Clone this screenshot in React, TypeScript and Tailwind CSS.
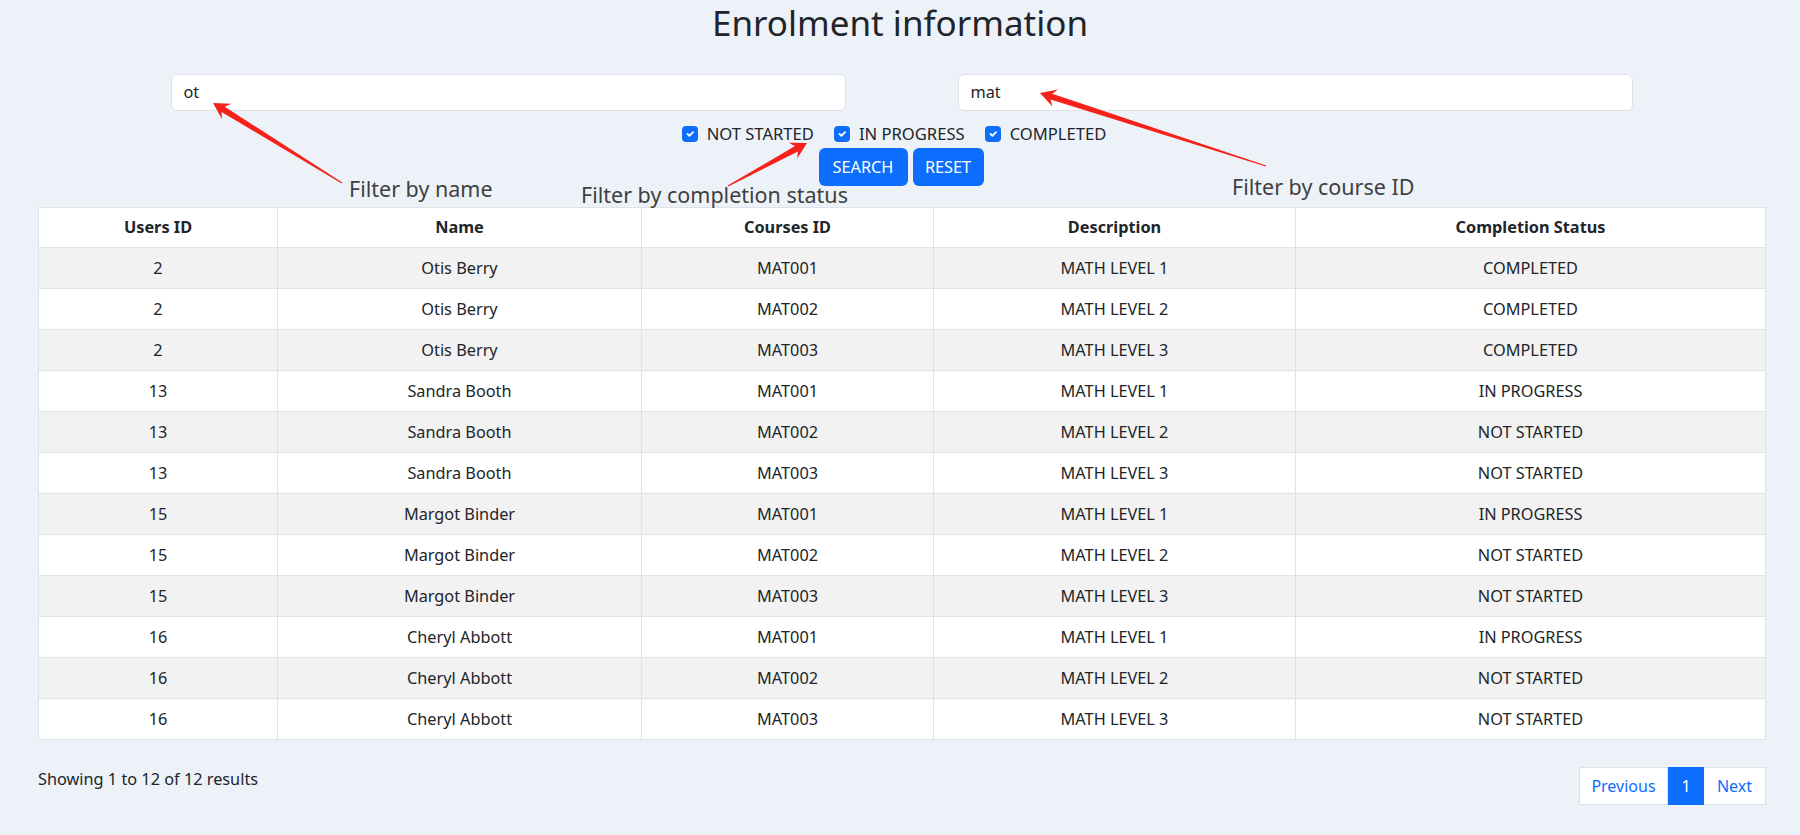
import React from "react";

const rows: [string, string, string, string, string][] = [
  ["2", "Otis Berry", "MAT001", "MATH LEVEL 1", "COMPLETED"],
  ["2", "Otis Berry", "MAT002", "MATH LEVEL 2", "COMPLETED"],
  ["2", "Otis Berry", "MAT003", "MATH LEVEL 3", "COMPLETED"],
  ["13", "Sandra Booth", "MAT001", "MATH LEVEL 1", "IN PROGRESS"],
  ["13", "Sandra Booth", "MAT002", "MATH LEVEL 2", "NOT STARTED"],
  ["13", "Sandra Booth", "MAT003", "MATH LEVEL 3", "NOT STARTED"],
  ["15", "Margot Binder", "MAT001", "MATH LEVEL 1", "IN PROGRESS"],
  ["15", "Margot Binder", "MAT002", "MATH LEVEL 2", "NOT STARTED"],
  ["15", "Margot Binder", "MAT003", "MATH LEVEL 3", "NOT STARTED"],
  ["16", "Cheryl Abbott", "MAT001", "MATH LEVEL 1", "IN PROGRESS"],
  ["16", "Cheryl Abbott", "MAT002", "MATH LEVEL 2", "NOT STARTED"],
  ["16", "Cheryl Abbott", "MAT003", "MATH LEVEL 3", "NOT STARTED"],
];

function arrowPoints(tx: number, ty: number, hx: number, hy: number) {
  const dx = hx - tx;
  const dy = hy - ty;
  const len = Math.hypot(dx, dy);
  const ux = dx / len;
  const uy = dy / len;
  const nx = -uy;
  const ny = ux;
  const p = (along: number, side: number) =>
    `${(hx - ux * along + nx * side).toFixed(1)},${(hy - uy * along + ny * side).toFixed(1)}`;
  const tail = len;
  return [
    p(tail, 0.6),
    p(12, 3),
    p(16, 9),
    p(0, 0),
    p(16, -9),
    p(12, -3),
    p(tail, -0.6),
  ].join(" ");
}

function Check({ label }: { label: string }) {
  return (
    <label className="flex items-center gap-[9px]">
      <span className="w-4 h-4 rounded-[4px] bg-[#0d6efd] flex items-center justify-center">
        <svg width="12" height="12" viewBox="0 0 20 20">
          <path d="M6 10l3 3l6-6" fill="none" stroke="#fff" strokeWidth="3" strokeLinecap="round" strokeLinejoin="round" />
        </svg>
      </span>
      <span className="text-[16.6px]">{label}</span>
    </label>
  );
}

export default function App() {
  return (
    <div
      className="relative min-h-screen bg-[#edf2f9] text-[#212529] text-[16.3px]"
      style={{ fontFamily: '"Noto Sans", "Open Sans", sans-serif' }}
    >
      <h2 className="text-center text-[35px] leading-[43px] pt-[1px] font-normal">Enrolment information</h2>

      <div className="mt-[30px] flex justify-center gap-[112px] pl-[3px]">
        <div className="w-[675px] h-[37px] bg-white border border-[#dee2e6] rounded-[6px] pl-3 flex items-center">ot</div>
        <div className="w-[675px] h-[37px] bg-white border border-[#dee2e6] rounded-[6px] pl-3 flex items-center">mat</div>
      </div>

      <div className="mt-[11px] h-[24px] flex justify-center items-center gap-5 pr-[12px]">
        <Check label="NOT STARTED" />
        <Check label="IN PROGRESS" />
        <Check label="COMPLETED" />
      </div>

      <div className="mt-[2px] flex justify-center gap-[5px] pl-[2px]">
        <button className="w-[89px] h-[38px] rounded-[6px] bg-[#0d6efd] text-white">SEARCH</button>
        <button className="w-[71px] h-[38px] rounded-[6px] bg-[#0d6efd] text-white">RESET</button>
      </div>

      <div className="mt-[21px] ml-[38px] w-[1728px] border border-[#dee2e6] bg-white">
        <div className="grid grid-cols-[238px_364px_292px_362px_1fr] h-[39px] font-bold">
          {["Users ID", "Name", "Courses ID", "Description", "Completion Status"].map((h, i) => (
            <div key={h} className={`flex items-center justify-center ${i > 0 ? "border-l border-[#dee2e6]" : ""}`}>
              {h}
            </div>
          ))}
        </div>
        {rows.map((r, ri) => (
          <div
            key={ri}
            className={`grid grid-cols-[238px_364px_292px_362px_1fr] h-[41px] border-t border-[#dee2e6] ${
              ri % 2 === 0 ? "bg-[#f2f2f2]" : "bg-white"
            }`}
          >
            {r.map((c, i) => (
              <div key={i} className={`flex items-center justify-center ${i > 0 ? "border-l border-[#dee2e6]" : ""}`}>
                {c}
              </div>
            ))}
          </div>
        ))}
      </div>

      <div className="mt-[27px] ml-[38px] w-[1728px] flex justify-between items-start">
        <div className="leading-[24px]">Showing 1 to 12 of 12 results</div>
        <div className="flex h-[38px] text-[16px]">
          <div className="w-[89px] border border-[#dee2e6] bg-white text-[#0d6efd] flex items-center justify-center">Previous</div>
          <div className="w-[36px] border border-[#0d6efd] bg-[#0d6efd] text-white flex items-center justify-center">1</div>
          <div className="w-[62px] border border-l-0 border-[#dee2e6] bg-white text-[#0d6efd] flex items-center justify-center">Next</div>
        </div>
      </div>

      <svg className="absolute left-0 top-0 pointer-events-none" width="1800" height="835">
        <polygon points={arrowPoints(342, 183, 213, 103)} fill="#f5221b" />
        <polygon points={arrowPoints(728, 186, 807, 143)} fill="#f5221b" />
        <polygon points={arrowPoints(1266, 166, 1040, 93)} fill="#f5221b" />
      </svg>

      <div className="absolute left-[349px] top-[175px] text-[21.5px] leading-[28px] text-[#404040]">Filter by name</div>
      <div className="absolute left-[581px] top-[181px] text-[21.5px] leading-[28px] text-[#404040]">Filter by completion status</div>
      <div className="absolute left-[1232px] top-[173px] text-[21.5px] leading-[28px] text-[#404040]">Filter by course ID</div>
    </div>
  );
}
